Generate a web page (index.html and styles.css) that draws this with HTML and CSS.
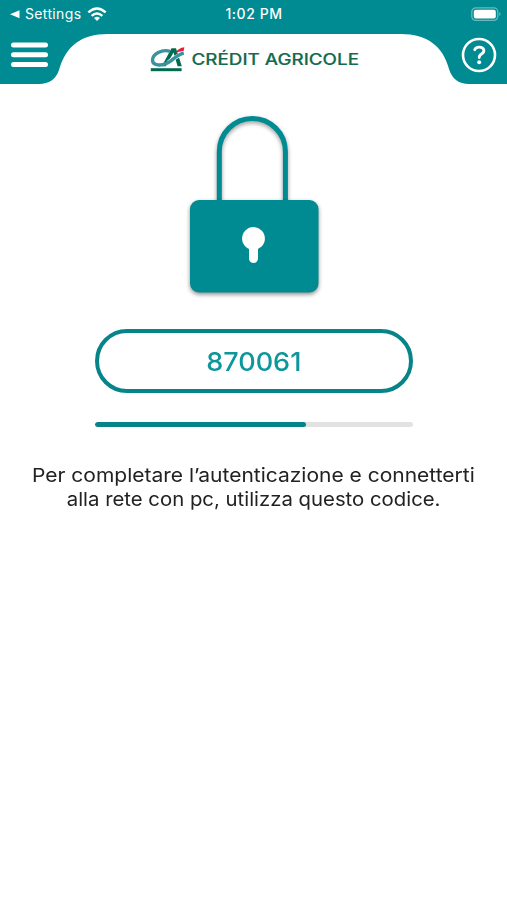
FILE: index.html
```html
<!DOCTYPE html>
<html lang="it">
<head>
<meta charset="utf-8">
<meta name="viewport" content="width=device-width, initial-scale=1">
<title>Crédit Agricole</title>
<link rel="stylesheet" href="styles.css">
</head>
<body>
<header class="header">
  <svg class="header-shape" width="507" height="50" viewBox="0 34 507 50" aria-hidden="true">
    <path fill="#fff" d="M39 84C49 84 56 79 59 70C66 46 81 34 108 34H401C427 34 443 46 449 69C452 79 459 84 469 84Z"/>
  </svg>
  <div class="status">
    <div class="status-left">
      <svg width="10" height="9" viewBox="0 0 10 9"><path fill="#fff" d="M9.500 .3V8.300L0 4.300Z"/></svg>
      <span class="back">Settings</span>
      <svg class="wifi" width="20" height="15" viewBox="0 0 20 15" fill="none" stroke="#fff" stroke-width="2.400"><path d="M1.300 5.300Q10-2.500 18.700 5.300M4.600 8.800Q10 4 15.400 8.800"/><path fill="#fff" stroke="none" d="M7 11Q10 8.500 13 11L10 14Z"/></svg>
    </div>
    <span class="time">1:02 PM</span>
    <svg class="battery" width="31" height="15" viewBox="0 0 31 15"><rect x=".8" y=".8" width="26" height="12.600" rx="4" fill="none" stroke="#6bbabd" stroke-width="1.200"/><rect x="2.800" y="2.700" width="22" height="8.800" rx="2" fill="#fff"/><path fill="#6bbabd" d="M28.300 5Q31 7 28.300 9Z"/></svg>
  </div>
  <div class="bar">
    <svg class="menu" width="37" height="26" viewBox="0 0 37 26" stroke="#fff" stroke-width="5" stroke-linecap="round"><path d="M2.500 3H34.500M2.500 12.800H34.500M2.500 22.600H34.500"/></svg>
    <svg class="logo" width="210" height="28" viewBox="150 45 210 28">
      <path fill="#006b4f" fill-rule="evenodd" d="M161.800 66.200L171.500 48.300H176L181.800 66.200H177.600L173.500 52.500L165.800 66.200Z"/>
      <path fill="none" stroke="#fff" stroke-width="4.200" d="M168 62.700C173.500 58.500 177 55.200 184.500 53.200"/>
      <path fill="none" stroke="#3a929d" stroke-width="3.400" d="M170 51.300C162 48.800 152.700 54 152.500 60C152.500 66.300 163.500 66.500 170.500 61.200C175.500 57.300 178 54.500 183.800 53.200"/>
      <path fill="#e3203c" d="M175.500 52.800Q178.500 47.800 184.400 47.200L183.600 51Q178.800 51.500 175.500 52.800Z"/>
      <path fill="#006b4f" d="M150.800 68.200H181.600V71.200H150.800Z"/>
      <text class="brand" x="191.500" y="65.300" textLength="167.500" lengthAdjust="spacingAndGlyphs">CRÉDIT AGRICOLE</text>
    </svg>
    <svg class="help" width="36" height="36" viewBox="0 0 36 36" fill="none" stroke="#fff"><circle cx="18" cy="18" r="16" stroke-width="2.600"/><path stroke-width="2.800" stroke-linecap="round" d="M13.700 12.700Q14.700 9.900 18.400 10.100C24 10.400 23.700 15.200 20.800 16.700Q18.200 18.100 18.200 20.500"/><circle cx="18.200" cy="25.200" r="2" fill="#fff" stroke="none"/></svg>
  </div>
</header>
<main>
  <svg class="lock" width="150" height="200" viewBox="180 106 150 200" role="img" aria-label="Lucchetto">
    <path class="shackle" d="M219.300 202V151.500A33 33 0 0 1 285.400 151.500V202"/>
    <rect class="lock-body" x="190" y="200" width="128.500" height="92.500" rx="9"/>
    <circle cx="253.500" cy="238.500" r="11.400" fill="#fff"/><path stroke="#fff" stroke-width="9" stroke-linecap="round" d="M253.500 244V258.500"/>
  </svg>
  <div class="code"><span>870061</span></div>
  <div class="track"><div class="progress" style="width:66.5%"></div></div>
  <p class="message"><span class="line1">Per completare l’autenticazione e connetterti</span><span class="line2">alla rete con pc, utilizza questo codice.</span></p>
</main>
</body>
</html>
```
FILE: styles.css
```css
* { box-sizing: border-box; }
body { margin: 0; min-height: 900px; background: #fff; color: #222; font-family: Inter, "Open Sans", sans-serif; overflow: hidden; }
svg { display: block; flex: none; }
.header { position: relative; width: 507px; height: 84px; background: #008a91; color: #fff; }
.header-shape { position: absolute; left: 0; bottom: 0; }
.status { position: relative; height: 28px; display: grid; grid-template-columns: 1fr auto 1fr; align-items: center; padding: 0 5px 0 10px; }
.status-left { display: flex; align-items: center; }
.back { font-size: 14px; line-height: 20px; margin-left: 5px; letter-spacing: .35px; }
.wifi { margin-left: 6px; }
.time { font-size: 14px; font-weight: 500; line-height: 20px; letter-spacing: .55px; transform: translateX(-2px); }
.battery { justify-self: end; }
.bar { position: relative; height: 56px; display: flex; align-items: flex-start; padding: 0 10px; }
.menu { margin: 14px 0 0 1px; }
.logo { margin: 17px 0 0 102px; }
.brand { font-family: Inter, sans-serif; font-size: 15.5px; font-weight: 500; fill: #126b4e; stroke: #126b4e; stroke-width: .15px; }
.help { margin: 9px 0 0 101px; }
main { display: flex; flex-direction: column; align-items: center; padding-top: 22px; }
.lock { margin-left: 3px; }
.shackle { fill: none; stroke: #008a91; stroke-width: 5; filter: drop-shadow(0 2px 2px rgba(0,0,0,.4)); }
.lock-body { fill: #008a91; filter: drop-shadow(0 2px 2px rgba(0,0,0,.45)); }
.code { width: 318px; height: 64px; margin-top: 23px; border: 4px solid #078489; border-radius: 32px; display: flex; align-items: center; justify-content: center; color: #0e969b; font-size: 26px; font-weight: 500; }
.code span { transform: scaleX(1.04); }
.track { width: 318px; height: 5px; margin-top: 29px; border-radius: 3px; background: #e2e2e2; overflow: hidden; }
.progress { height: 5px; border-radius: 3px; background: #078489; }
.message { margin: 37px 0 0; display: flex; flex-direction: column; align-items: center; font-size: 19px; line-height: 24px; white-space: nowrap; }
.line1 { transform: scaleX(1.105); }
.line2 { transform: scaleX(1.07); }
```
